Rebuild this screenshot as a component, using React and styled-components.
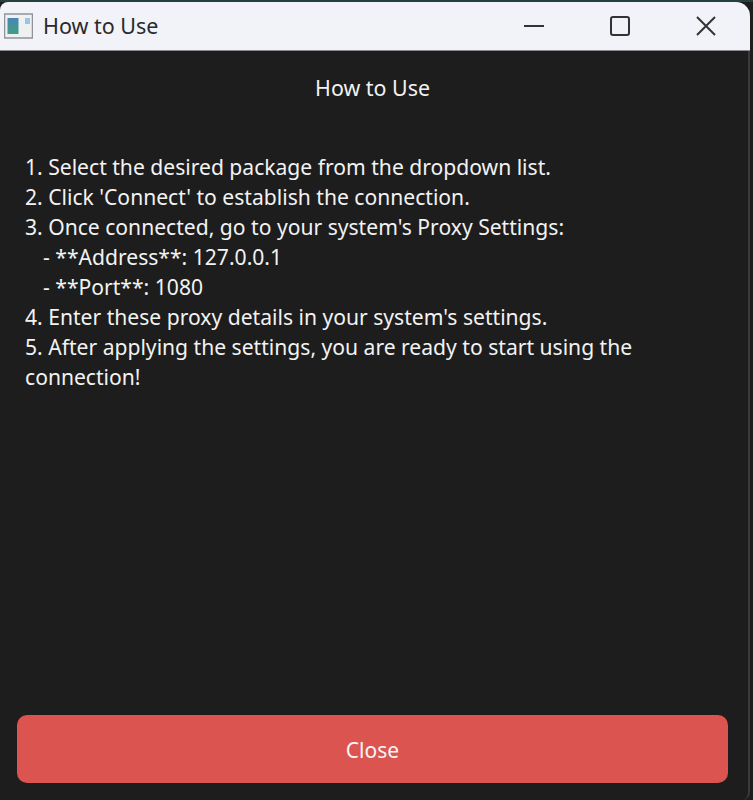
import React from "react"
import styled, { createGlobalStyle } from "styled-components"

const GlobalStyle = createGlobalStyle`
  html, body {
    margin: 0;
    padding: 0;
    background: #1d1d1f;
  }
`

const Window = styled.div`
  width: 753px;
  height: 800px;
  box-sizing: border-box;
  border-top: 2px solid #24403f;
  padding-right: 3px;
  display: flex;
  flex-direction: column;
  background: #1d1d1e;
  font-family: "Noto Sans", "Open Sans", sans-serif;
  overflow: hidden;
`

const TitleBar = styled.div`
  height: 48px;
  flex-shrink: 0;
  display: flex;
  align-items: center;
  padding: 0 1px 0 4px;
  background: #f2f3f8;
  border-radius: 8px 14px 0 0;
  border-bottom: 1px solid #8a8a8c;
  color: #2a2a2c;
`

const AppIcon = styled.svg`
  width: 29px;
  height: 26px;
  flex-shrink: 0;
`

const WindowTitle = styled.span`
  margin-left: 10px;
  padding-bottom: 2px;
  font-size: 21.5px;
  flex: 1;
`

const WindowButton = styled.button`
  width: 86px;
  height: 100%;
  padding: 0;
  border: 0;
  background: none;
  display: flex;
  align-items: center;
  justify-content: center;
`

const Content = styled.div`
  flex: 1;
  display: flex;
  flex-direction: column;
  padding: 22px 20px 17px 17px;
  border-right: 2px solid #3a3a3c;
  border-bottom-right-radius: 8px;
  color: #f2f2f2;
`

const Heading = styled.div`
  font-size: 21.4px;
  line-height: 30px;
  text-align: center;
`

const Steps = styled.div`
  margin: 49px 0 0 8px;
  width: 660px;
  flex: 1;
  font-size: 21.1px;
  line-height: 30px;
`

const Step = styled.div`
  padding-left: ${(p) => (p.$sub ? "18px" : "0")};
`

const CloseButton = styled.button`
  height: 68px;
  flex-shrink: 0;
  border: 0;
  border-radius: 10px;
  padding-top: 3px;
  background: #db5450;
  color: #f4f4f4;
  font-family: inherit;
  font-size: 21px;
`

const steps = [
  { text: "1. Select the desired package from the dropdown list." },
  { text: "2. Click 'Connect' to establish the connection." },
  { text: "3. Once connected, go to your system's Proxy Settings:" },
  { text: "- **Address**: 127.0.0.1", sub: true },
  { text: "- **Port**: 1080", sub: true },
  { text: "4. Enter these proxy details in your system's settings." },
  { text: "5. After applying the settings, you are ready to start using the connection!" },
]

const App = () => {
  return (
    <Window>
      <GlobalStyle />
      <TitleBar>
        <AppIcon viewBox="0 0 29 26">
          <defs>
            <linearGradient id="pane" x1="0" y1="0" x2="0" y2="1">
              <stop offset="0" stopColor="#4a86b8" />
              <stop offset="1" stopColor="#3f9f7e" />
            </linearGradient>
          </defs>
          <rect x="0.5" y="1" width="28" height="24" fill="#eef0f2" stroke="#8e9498" strokeWidth="1.5" />
          <rect x="3.5" y="5" width="11" height="16" fill="url(#pane)" />
          <rect x="21" y="5" width="5" height="6" fill="#9cc4e4" />
        </AppIcon>
        <WindowTitle>How to Use</WindowTitle>
        <WindowButton aria-label="Minimize">
          <svg width="20" height="4" viewBox="0 0 20 4">
            <path d="M0 2H20" stroke="#333" strokeWidth="2" />
          </svg>
        </WindowButton>
        <WindowButton aria-label="Maximize">
          <svg width="20" height="20" viewBox="0 0 20 20">
            <rect x="1" y="1" width="18" height="18" rx="2" fill="none" stroke="#333" strokeWidth="2" />
          </svg>
        </WindowButton>
        <WindowButton aria-label="Close window">
          <svg width="20" height="20" viewBox="0 0 20 20">
            <path d="M1 1L19 19M19 1L1 19" stroke="#333" strokeWidth="2" />
          </svg>
        </WindowButton>
      </TitleBar>
      <Content>
        <Heading>How to Use</Heading>
        <Steps>
          {steps.map((s) => (
            <Step key={s.text} $sub={s.sub}>{s.text}</Step>
          ))}
        </Steps>
        <CloseButton>Close</CloseButton>
      </Content>
    </Window>
  )
}

export default App
